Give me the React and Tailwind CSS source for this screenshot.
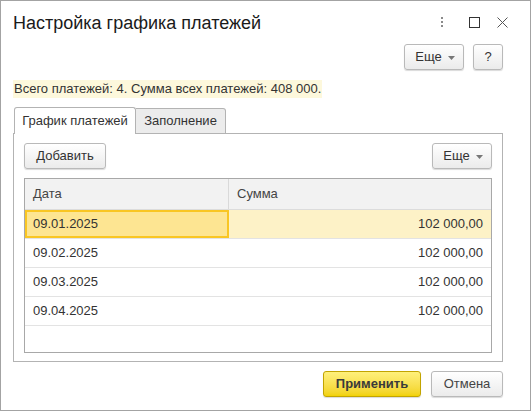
import React from 'react';

const rows = [
  { date: '09.01.2025', sum: '102 000,00' },
  { date: '09.02.2025', sum: '102 000,00' },
  { date: '09.03.2025', sum: '102 000,00' },
  { date: '09.04.2025', sum: '102 000,00' },
];

// обычная серая кнопка 1С
const Btn = ({ children, className = '' }) => (
  <button
    className={`h-[26px] flex items-center justify-center rounded-[3px] border border-[#b9b9b9] bg-gradient-to-b from-white to-[#ebebeb] text-[13px] text-[#333] shadow-[0_1px_1px_rgba(0,0,0,0.15)] ${className}`}
  >
    {children}
  </button>
);

const Caret = () => (
  <svg width="7" height="4" viewBox="0 0 7 4" className="ml-[6px] mt-[1px]">
    <path d="M0 0h7L3.5 4z" fill="#777" />
  </svg>
);

export default function App() {
  return (
    <div
      className="w-[531px] h-[411px] bg-white border border-[#a3a3a3] flex flex-col text-[#333]"
      style={{ fontFamily: '"Liberation Sans", Arial, sans-serif' }}
    >
      {/* Заголовок */}
      <div className="flex items-center h-[42px] pl-[12px] pr-[22px] pt-[1px]">
        <div className="flex-1 text-[18px] text-[#1a1a1a] leading-none">Настройка графика платежей</div>
        <div className="flex items-center">
          <svg width="4" height="12" viewBox="0 0 4 12" className="mr-[25px]">
            <rect x="1" y="0" width="2" height="2" fill="#8a8a8a" />
            <rect x="1" y="4" width="2" height="2" fill="#8a8a8a" />
            <rect x="1" y="8" width="2" height="2" fill="#8a8a8a" />
          </svg>
          <svg width="11" height="11" viewBox="0 0 11 11" className="mr-[17px]">
            <rect x="0.5" y="0.5" width="10" height="10" fill="none" stroke="#333" strokeWidth="1" />
          </svg>
          <svg width="11" height="11" viewBox="0 0 11 11">
            <path d="M0.5 0.5l10 10M10.5 0.5l-10 10" stroke="#555" strokeWidth="1" />
          </svg>
        </div>
      </div>

      {/* Командная панель формы */}
      <div className="flex justify-end gap-[9px] pr-[27px] mt-[1px]">
        <Btn className="w-[60px] pl-[2px]">Еще<Caret /></Btn>
        <Btn className="w-[30px]">?</Btn>
      </div>

      {/* Итоги */}
      <div className="flex px-[12px] mt-[10px]">
        <div className="bg-[#fdf8dc] px-[1px] h-[18px] leading-[18px] text-[13px] text-[#333]">
          Всего платежей: 4. Сумма всех платежей: 408 000.
        </div>
      </div>

      {/* Вкладки */}
      <div className="flex pl-[13px] mt-[9px] h-[27px] relative z-10">
        <div className="w-[122px] h-[27px] border border-b-0 border-[#b3b3b3] rounded-t-[3px] bg-white flex items-center justify-center text-[13px] text-[#333]">
          График платежей
        </div>
        <div className="w-[90px] h-[26px] mt-[1px] border border-l-0 border-[#b3b3b3] rounded-tr-[3px] bg-[#ececec] flex items-center justify-center text-[13px] text-[#333]">
          Заполнение
        </div>
      </div>

      <div className="mx-[12px] mr-[27px] -mt-[1px] h-[229px] border border-[#b3b3b3] px-[10px] pt-[9px] flex flex-col">
        <div className="flex justify-between">
          <Btn className="w-[82px]">Добавить</Btn>
          <Btn className="w-[60px] pl-[2px]">Еще<Caret /></Btn>
        </div>

        {/* Таблица */}
        <div className="mt-[9px] h-[175px] border border-[#a8a8a8] flex flex-col">
          <div className="flex h-[31px] bg-[#f2f2f2] border-b border-[#dcdcdc] text-[13px] text-[#444]">
            <div className="w-[204px] border-r border-[#d9d9d9] flex items-center pl-[8px]">Дата</div>
            <div className="flex-1 flex items-center pl-[8px]">Сумма</div>
          </div>
          {rows.map((r, i) => (
            <div
              key={r.date}
              className={`flex h-[29px] border-b border-[#e3e3e3] text-[13px] text-[#333] ${i === 0 ? 'bg-[#fdf2c7]' : ''}`}
            >
              <div
                className={`w-[204px] flex items-center ${
                  i === 0 ? 'bg-[#fde592] border-2 border-[#f9c623] pl-[6px]' : 'pl-[8px]'
                }`}
              >
                {r.date}
              </div>
              <div className="flex-1 flex items-center justify-end pr-[8px]">{r.sum}</div>
            </div>
          ))}
        </div>
      </div>

      {/* Кнопки формы */}
      <div className="flex justify-end gap-[10px] pr-[27px] mt-[9px]">
        <button className="w-[98px] h-[26px] rounded-[3px] border border-[#c2a400] bg-gradient-to-b from-[#fff07a] to-[#f2d200] text-[13px] font-bold text-[#3a3a3a] shadow-[0_1px_1px_rgba(0,0,0,0.15)]">
          Применить
        </button>
        <Btn className="w-[72px] text-[#444]">Отмена</Btn>
      </div>
    </div>
  );
}
